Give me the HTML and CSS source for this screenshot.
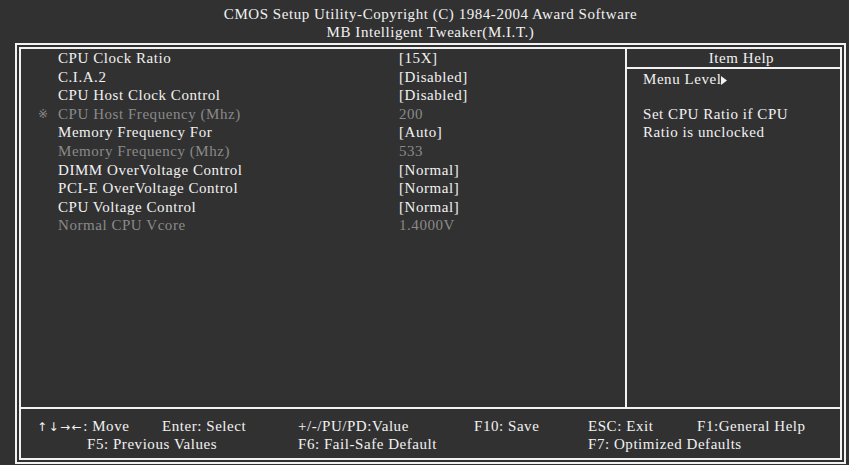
FILE: index.html
```html
<!DOCTYPE html>
<html>
<head>
<meta charset="utf-8">
<link rel="stylesheet" href="styles.css">
</head>
<body>
<div class="screen">
  <header class="title">
    <div>CMOS Setup Utility-Copyright (C) 1984-2004 Award Software</div>
    <div>MB Intelligent Tweaker(M.I.T.)</div>
  </header>
  <div class="frame">
    <div class="inner">
      <div class="main">
        <div class="items">
          <div class="row"><span class="mark"></span><span class="label">CPU Clock Ratio</span><span class="value">[15X]</span></div>
          <div class="row"><span class="mark"></span><span class="label">C.I.A.2</span><span class="value">[Disabled]</span></div>
          <div class="row"><span class="mark"></span><span class="label">CPU Host Clock Control</span><span class="value">[Disabled]</span></div>
          <div class="row dim"><span class="mark">※</span><span class="label">CPU Host Frequency (Mhz)</span><span class="value">200</span></div>
          <div class="row"><span class="mark"></span><span class="label">Memory Frequency For</span><span class="value">[Auto]</span></div>
          <div class="row dim"><span class="mark"></span><span class="label">Memory Frequency (Mhz)</span><span class="value">533</span></div>
          <div class="row"><span class="mark"></span><span class="label">DIMM OverVoltage Control</span><span class="value">[Normal]</span></div>
          <div class="row"><span class="mark"></span><span class="label">PCI-E OverVoltage Control</span><span class="value">[Normal]</span></div>
          <div class="row"><span class="mark"></span><span class="label">CPU Voltage Control</span><span class="value">[Normal]</span></div>
          <div class="row dim"><span class="mark"></span><span class="label">Normal CPU Vcore</span><span class="value">1.4000V</span></div>
        </div>
        <div class="help">
          <div class="help-head">Item Help</div>
          <div class="help-body">
            <div>Menu Level<svg class="tri" width="6" height="9" viewBox="0 0 6 9"><path d="M0 0 L6 4.5 L0 9 Z" fill="#f2f2f2"/></svg></div>
            <div>&nbsp;</div>
            <div>Set CPU Ratio if CPU</div>
            <div>Ratio is unclocked</div>
          </div>
        </div>
      </div>
      <div class="footer">
        <div class="fline l1">
          <span class="c1"><span class="arrows">↑↓→←</span>: Move</span>
          <span class="c2">Enter: Select</span>
          <span class="c3">+/-/PU/PD:Value</span>
          <span class="c4">F10: Save</span>
          <span class="c5">ESC: Exit</span>
          <span class="c6">F1:General Help</span>
        </div>
        <div class="fline l2">
          <span class="d1">F5: Previous Values</span>
          <span class="d2">F6: Fail-Safe Default</span>
          <span class="d3">F7: Optimized Defaults</span>
        </div>
      </div>
    </div>
  </div>
</div>
</body>
</html>
```
FILE: styles.css
```css
html, body {
  margin: 0;
  padding: 0;
  background: #313131;
}
body {
  width: 849px;
  height: 465px;
  overflow: hidden;
  font-family: "Liberation Serif", "Times New Roman", serif;
  font-size: 15px;
  letter-spacing: 0.55px;
  color: #f2f2f2;
}
.screen {
  width: 849px;
  height: 465px;
}
.title {
  padding: 5px 0 0 15px;
  width: 831px;
  height: 38px;
  line-height: 18px;
  text-align: center;
}
.frame {
  margin-left: 15px;
  width: 823px;
  height: 413px;
  border: 2px solid #f2f2f2;
  padding: 2px;
}
.inner {
  width: 819px;
  height: 409px;
  border: 2px solid #f2f2f2;
  display: flex;
  flex-direction: column;
}
.main {
  display: flex;
  height: 358px;
}
.items {
  width: 604px;
  border-right: 2px solid #f2f2f2;
}
.row {
  display: grid;
  grid-template-columns: 17px 20px 341px auto;
  line-height: 18.6px;
  height: 18.6px;
  white-space: nowrap;
}
.row::before {
  content: "";
}
.row.dim {
  color: #8a8a8a;
}
.mark {
  font-family: "DejaVu Sans", "Noto Sans CJK JP", sans-serif;
  font-size: 12px;
  letter-spacing: 0;
}
.help {
  flex: 1;
  display: flex;
  flex-direction: column;
}
.help-head {
  height: 18px;
  line-height: 18px;
  text-align: center;
  padding-left: 16px;
  border-bottom: 2px solid #f2f2f2;
}
.help-body {
  padding: 2px 0 0 16px;
  line-height: 17.5px;
}
.tri {
  margin-left: 0;
  vertical-align: -1px;
}
.footer {
  flex: 1;
  border-top: 2px solid #f2f2f2;
  padding-top: 8px;
}
.fline {
  display: flex;
  line-height: 18px;
  height: 18px;
  white-space: nowrap;
}
.arrows {
  font-family: "DejaVu Sans", sans-serif;
  font-size: 12px;
  letter-spacing: 1.5px;
}
.l1 { padding-left: 16px; }
.c1 { width: 125px; }
.c2 { width: 136px; }
.c3 { width: 176px; }
.c4 { width: 114px; }
.c5 { width: 109px; }
.l2 { padding-left: 66px; }
.d1 { width: 211px; }
.d2 { width: 290px; }
```
